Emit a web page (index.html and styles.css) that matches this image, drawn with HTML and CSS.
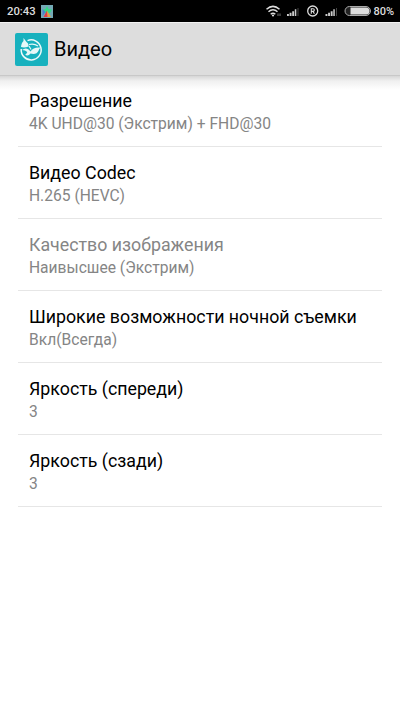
FILE: index.html
```html
<!DOCTYPE html>
<html lang="ru">
<head>
<meta charset="utf-8">
<title>Видео</title>
<link rel="stylesheet" href="styles.css">
</head>
<body>
<div class="status">
  <span class="clock">20:43</span>
  <svg class="app" width="12" height="13" viewBox="0 0 12 13"><rect width="12" height="13" fill="#74a9b5"/><path d="M2 4.500 4.500 4 6 1l1.500 3L11 4.500 9 8H4z" fill="#35d987"/><path d="M6 5.500 2.500 12H7z" fill="#e33b48"/><path d="M6 5.500 10 12H6.500z" fill="#e9a03c"/><path d="M1.500 4v7L4.500 7z" fill="#4a80d0"/></svg>
  <span class="spacer"></span>
  <svg class="icons" width="108" height="14" viewBox="0 0 108 14">
    <g fill="none" stroke="#ddd" stroke-width="1.500"><path d="M0.500 5.200Q7 -0.500 13.500 5.200M2.500 7.800Q7 3.800 11.500 7.800M4.700 10.200Q7 8.200 9.300 10.200"/></g>
    <circle cx="7" cy="11.500" r="1.100" fill="#ddd"/><path d="M12 9.500v2.500M14 9.500v2.500" stroke="#777"/>
    <g fill="#ccc"><path d="M21 10h1.900v2H21zM23.600 8.800h1.900V12h-1.900zM26.200 7.200h1.900V12h-1.900zM28.800 5.200h1.500V12h-1.500z"/><path d="M31.500 4h1v8h-1z" fill="#444"/><path d="M59.500 10h1.900v2h-1.900zM62.100 8.800H64V12h-1.900zM64.700 7.200h1.900V12h-1.900zM67.300 5.200h1.500V12h-1.500z"/><path d="M70 4h1v8h-1z" fill="#444"/></g>
    <circle cx="46.700" cy="7" r="5" fill="none" stroke="#ddd" stroke-width="1.300"/>
    <path d="M45.300 9.700V4.700h1.700a1.300 1.300 0 0 1 0 2.700h-1.700M47 7.400l1.400 2.300" fill="none" stroke="#ddd" stroke-width="1.100"/>
    <rect x="79" y="2.500" width="25.500" height="9" rx="4.500" fill="#222" stroke="#aaa"/><path d="M84.500 3.500h15.500a3.500 3.500 0 0 1 0 7h-15.500z" fill="#ddd"/>
  </svg>
  <span class="percent">80%</span>
</div>
<header class="header">
  <svg width="33" height="33" viewBox="0 0 33 33"><rect width="33" height="33" rx="2" fill="#17b1be"/>
    <path d="M12.500 7.600A10 10 0 1 1 6.200 16" fill="none" stroke="#eefafa" stroke-width="1.500"/>
    <path d="M8.500 5 11.500 9c1.800 1 2.200 2.800 2 4.500-2.500 1-5 1.300-7.500.5C6.300 11.500 6.800 9.500 8.500 8z" fill="#e7f8f8"/>
    <path d="M7 17c3-2.500 6-2 8.500 1.500 2-3 5-4.500 10-4-2 2-2 4.500-4 5.700-2 1.200-4.200.8-6 .3-1.500 2.200-4 2.500-5.300 1 1.300-.8 2-1.700 2-2.500C11 17.700 9 17 7 17z" fill="#e7f8f8"/>
    <path d="M14 11.500c3.500-1 6.500-.3 9 1.500M14 13l2 3.500" fill="none" stroke="#e7f8f8" stroke-width="1.200"/>
  </svg>
  <h1>Видео</h1>
</header>
<main class="list">
  <section class="row"><h2>Разрешение</h2><p>4K UHD@30 (Экстрим) + FHD@30</p></section>
  <section class="row"><h2>Видео Codec</h2><p>H.265 (HEVC)</p></section>
  <section class="row disabled"><h2>Качество изображения</h2><p>Наивысшее (Экстрим)</p></section>
  <section class="row"><h2>Широкие возможности ночной съемки</h2><p>Вкл(Всегда)</p></section>
  <section class="row"><h2>Яркость (спереди)</h2><p>3</p></section>
  <section class="row"><h2>Яркость (сзади)</h2><p>3</p></section>
</main>
</body>
</html>
```
FILE: styles.css
```css
* { box-sizing: border-box; }
body {
  margin: 0;
  height: 711px;
  background: #fff;
  font-family: Roboto, "Liberation Sans", sans-serif;
  color: #000;
  overflow: hidden;
}
h1, h2, p { margin: 0; font-weight: 400; white-space: nowrap; }
.status {
  display: flex;
  align-items: center;
  height: 22px;
  padding: 0 6px 0 7px;
  background: #000;
  color: #ddd;
  font-size: 11px;
  font-weight: 500;
}
.clock { font-size: 11.300px; }
.app { margin-left: 5px; }
.spacer { flex: 1; }
.icons { margin-right: -1px; }
.header {
  display: flex;
  align-items: center;
  gap: 6px;
  height: 54px;
  padding-left: 15px;
  background: #ddd;
  border-top: 1px solid #f2f2f2;
  border-bottom: 1px solid #c8c8c8;
}
.header h1 { font-size: 20px; line-height: 24px; }
.list {
  padding: 0 18px;
  background: linear-gradient(#d6d6d6, #f0f0f0 5px, #fff 14px);
}
.row {
  height: 72px;
  padding: 14px 11px 0;
  border-bottom: 1px solid #e6e6e6;
}
.row:first-child { height: 71px; padding-top: 13px; }
.row h2 { font-size: 17.800px; line-height: 24px; }
.row p { font-size: 15.600px; line-height: 22px; color: #858585; }
.disabled h2 { color: #858585; }
```
